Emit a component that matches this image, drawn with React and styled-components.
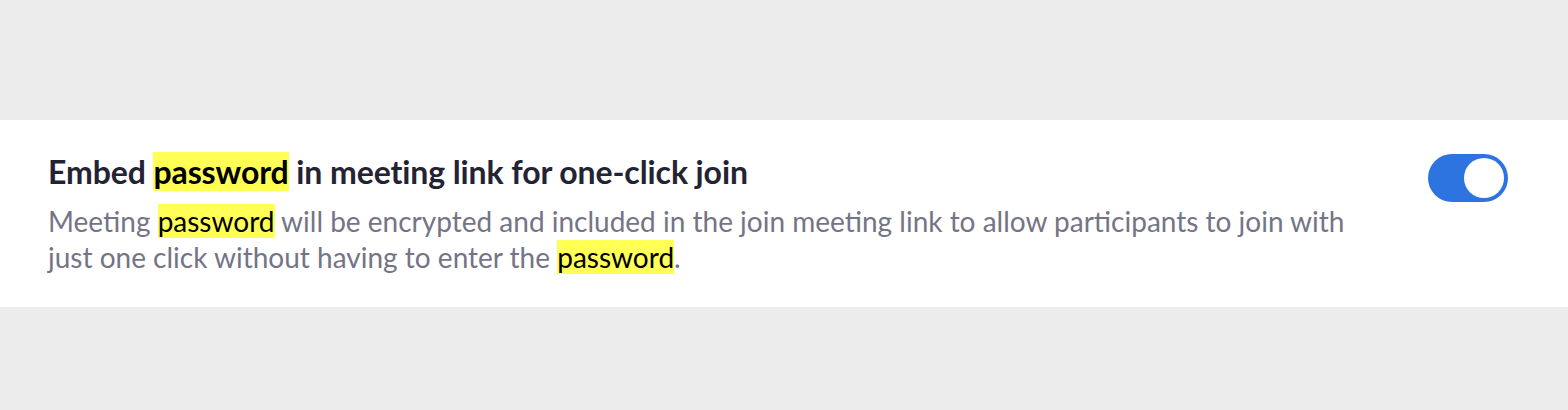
import React, { useState } from "react"
import styled, { createGlobalStyle } from "styled-components"

const Global = createGlobalStyle`
  html, body {
    margin: 0;
    background: #ececec;
    font-family: Lato, "Noto Sans", sans-serif;
  }
`

const Page = styled.div`
  height: 410px;
  padding-top: 120px;
  box-sizing: border-box;
`

const Row = styled.section`
  background: #fff;
  height: 187px;
  box-sizing: border-box;
  padding: 32px 60px 0 48px;
  display: flex;
  align-items: flex-start;
  justify-content: space-between;
`

const Text = styled.div`
  max-width: 1320px;
`

const Title = styled.h3`
  margin: 0 0 11px;
  font-size: 32px;
  font-weight: 700;
  line-height: 40px;
  letter-spacing: -0.1px;
  color: #232333;
`

const Desc = styled.p`
  margin: 0;
  font-size: 28px;
  line-height: 36px;
  color: #747487;
`

const Mark = styled.mark`
  background: #ffff55;
  color: #000;
`

const Switch = styled.button`
  flex: none;
  margin-top: 2px;
  width: 80px;
  height: 48px;
  border: none;
  border-radius: 24px;
  padding: 4px;
  background: ${p => (p.$on ? "#2d74e1" : "#c9c9d1")};
  display: flex;
  justify-content: ${p => (p.$on ? "flex-end" : "flex-start")};
  cursor: pointer;
`

const Knob = styled.span`
  width: 40px;
  height: 40px;
  border-radius: 50%;
  background: #fff;
`

export default function App() {
  const [on, setOn] = useState(true)
  return (
    <Page>
      <Global />
      <Row>
        <Text>
          <Title>
            Embed <Mark>password</Mark> in meeting link for one-click join
          </Title>
          <Desc>
            Meeting <Mark>password</Mark> will be encrypted and included in the join meeting
            link to allow participants to join with just one click without having to enter
            the <Mark>password</Mark>.
          </Desc>
        </Text>
        <Switch $on={on} onClick={() => setOn(!on)}>
          <Knob />
        </Switch>
      </Row>
    </Page>
  )
}
